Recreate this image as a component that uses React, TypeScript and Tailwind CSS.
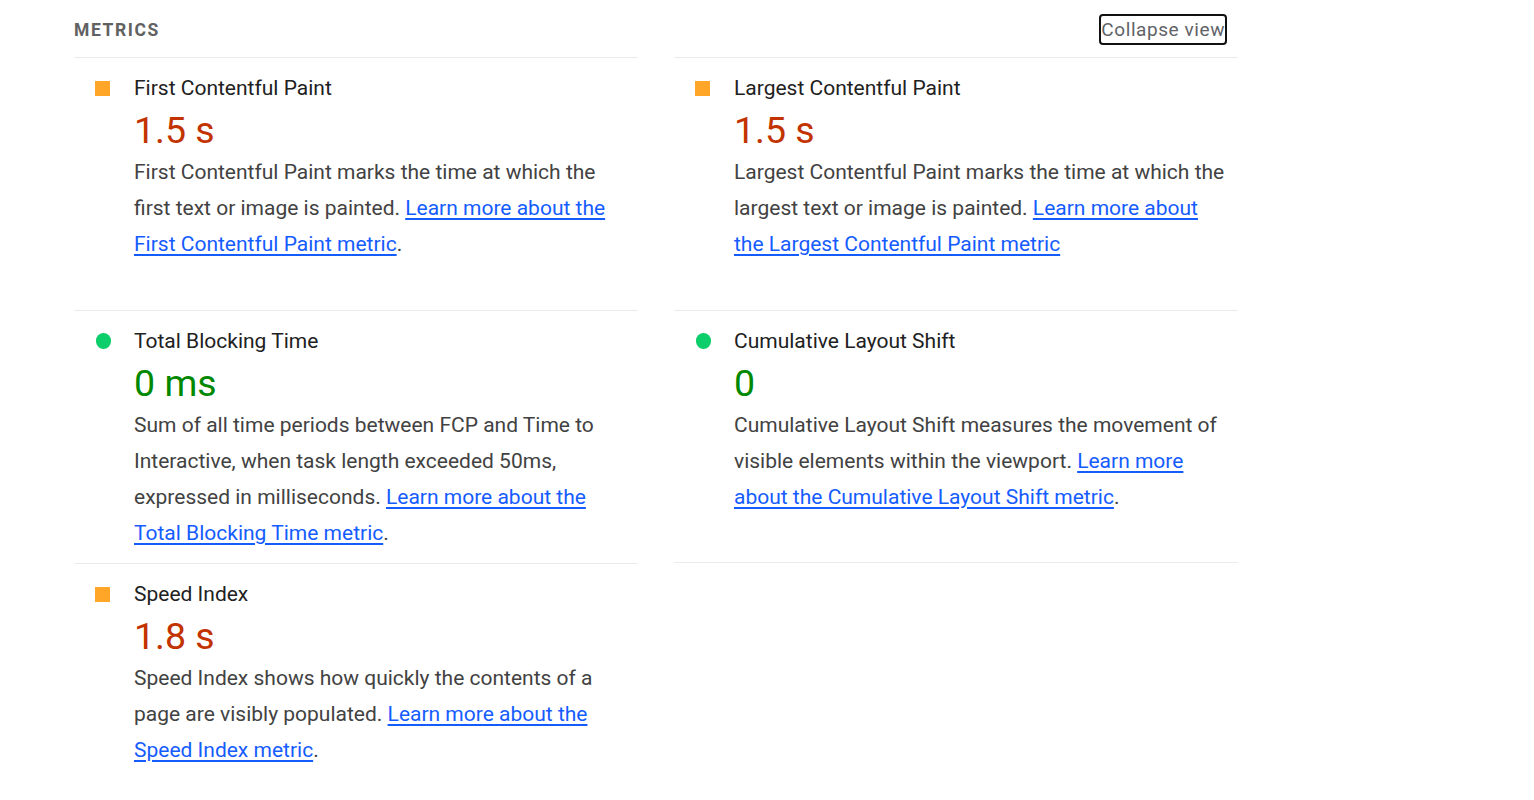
import React from 'react';

type Metric = {
  title: string;
  value: string;
  rating: 'average' | 'pass';
  text: string;
  link: string;
  period: boolean;
  last?: boolean;
};

const METRICS: Metric[] = [
  {
    title: 'First Contentful Paint',
    value: '1.5 s',
    rating: 'average',
    text: 'First Contentful Paint marks the time at which the first text or image is painted. ',
    link: 'Learn more about the First Contentful Paint metric',
    period: true,
  },
  {
    title: 'Largest Contentful Paint',
    value: '1.5 s',
    rating: 'average',
    text: 'Largest Contentful Paint marks the time at which the largest text or image is painted. ',
    link: 'Learn more about the Largest Contentful Paint metric',
    period: false,
  },
  {
    title: 'Total Blocking Time',
    value: '0 ms',
    rating: 'pass',
    text: 'Sum of all time periods between FCP and Time to Interactive, when task length exceeded 50ms, expressed in milliseconds. ',
    link: 'Learn more about the Total Blocking Time metric',
    period: true,
  },
  {
    title: 'Cumulative Layout Shift',
    value: '0',
    rating: 'pass',
    text: 'Cumulative Layout Shift measures the movement of visible elements within the viewport. ',
    link: 'Learn more about the Cumulative Layout Shift metric',
    period: true,
    last: true,
  },
  {
    title: 'Speed Index',
    value: '1.8 s',
    rating: 'average',
    text: 'Speed Index shows how quickly the contents of a page are visibly populated. ',
    link: 'Learn more about the Speed Index metric',
    period: true,
    last: true,
  },
];

function MetricCard({ m }: { m: Metric }) {
  return (
    <div
      className={`flex h-[253px] border-t border-[#ebebeb] pt-3 pl-[21px] pr-3 ${
        m.last ? 'border-b' : ''
      }`}
    >
      {/* rating icon */}
      <div className="flex h-9 w-4 shrink-0 items-center">
        {m.rating === 'average' ? (
          <span className="block h-[15px] w-[15px] bg-[#ffa629]" />
        ) : (
          <span className="ml-px block h-4 w-4 rounded-full bg-[#0cce6b]" />
        )}
      </div>
      <div className="ml-[23px] flex-1">
        <div className="text-[21px] leading-9 text-[#212121]">{m.title}</div>
        <div
          className={`text-[37.5px] leading-[48px] ${
            m.rating === 'average' ? 'text-[#c33300]' : 'text-[#008800]'
          }`}
        >
          {m.value}
        </div>
        <p className="text-[21px] leading-9 text-[#424242]">
          {m.text}
          <a href="#" className="text-[#155cff] underline decoration-2 underline-offset-[3px]">
            {m.link}
          </a>
          {m.period ? '.' : ''}
        </p>
      </div>
    </div>
  );
}

export default function App() {
  return (
    <div className="min-h-screen bg-white font-['Roboto',sans-serif]">
      <div className="ml-[74px] w-[1164px]">
        <div className="flex h-[57px] items-center justify-between pt-[3px]">
          <h2 className="text-[17.5px] font-bold tracking-[0.09em] text-[#616161]">METRICS</h2>
          <button className="mr-[11px] mb-[1px] rounded-[4px] border-2 border-[#111] px-0 text-[19px] leading-[27px] tracking-[0.03em] text-[#5f6368]">
            Collapse view
          </button>
        </div>
        <div className="grid grid-cols-2 gap-x-9">
          {METRICS.map((m) => (
            <MetricCard key={m.title} m={m} />
          ))}
        </div>
      </div>
    </div>
  );
}
